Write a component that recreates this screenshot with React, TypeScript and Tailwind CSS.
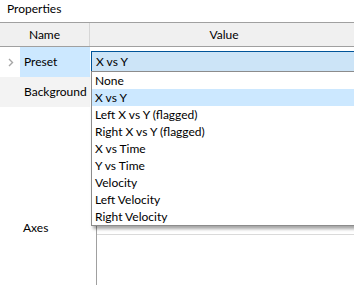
import React from 'react';

const presets = [
  'None',
  'X vs Y',
  'Left X vs Y (flagged)',
  'Right X vs Y (flagged)',
  'X vs Time',
  'Y vs Time',
  'Velocity',
  'Left Velocity',
  'Right Velocity',
];

const App: React.FC = () => {
  const selected = 'X vs Y';

  return (
    <div className="relative w-[354px] h-[285px] overflow-hidden bg-white text-[12px] text-black font-['Lato','Liberation_Sans',sans-serif]">
      {/* Title */}
      <div className="h-[22px] pl-[7px] leading-[17px]">Properties</div>

      {/* Header */}
      <div className="flex h-[25px] bg-[#f0f0f0] border-y border-[#a0a0a0]">
        <div className="w-[90px] flex items-center justify-center border-r border-[#d6d6d6]">Name</div>
        <div className="flex-1 flex items-center justify-center pl-[4px]">Value</div>
      </div>

      {/* Preset row */}
      <div className="flex h-[30px]">
        <div className="w-[20px] flex items-center justify-center">
          <svg width="6" height="9" viewBox="0 0 6 9" className="ml-[1px]">
            <path d="M1 1 L4.5 4.5 L1 8" fill="none" stroke="#a6a6a6" strokeWidth="1.4" />
          </svg>
        </div>
        <div className="w-[70px] bg-[#cce8ff] flex items-center pl-[4px]">Preset</div>
        <div className="flex-1 pt-[4px] pl-[1px]">
          <div className="h-[20px] bg-[#cce4f7] border-t border-l border-[#005499] flex items-center pl-[4px]">
            {selected}
          </div>
        </div>
      </div>

      {/* Background row */}
      <div className="flex h-[30px]">
        <div className="w-[90px] bg-[#f3f3f3] flex items-center pl-[24px]">Background</div>
        <div className="flex-1" />
      </div>

      {/* Axes row */}
      <div className="flex h-[242px]">
        <div className="w-[90px] flex items-center pl-[23px]">Axes</div>
        <div className="flex-1 pl-[6px] pt-[4px]">
          <div className="h-full border-l border-[#a0a0a0] flex flex-col">
            <div className="h-[124px] border-b border-[#dadada]" />
          </div>
        </div>
      </div>

      {/* Dropdown list */}
      <div className="absolute left-[91px] top-[71px] w-[270px] bg-white border border-[#8c8c8c] shadow-[2px_3px_3px_rgba(0,0,0,0.35)] flex flex-col">
        {presets.map((p) => (
          <div
            key={p}
            className={`h-[17px] flex items-center pl-[3px] leading-[17px] ${p === selected ? 'bg-[#cce8ff]' : ''}`}
          >
            {p}
          </div>
        ))}
      </div>
    </div>
  );
};

export default App;
